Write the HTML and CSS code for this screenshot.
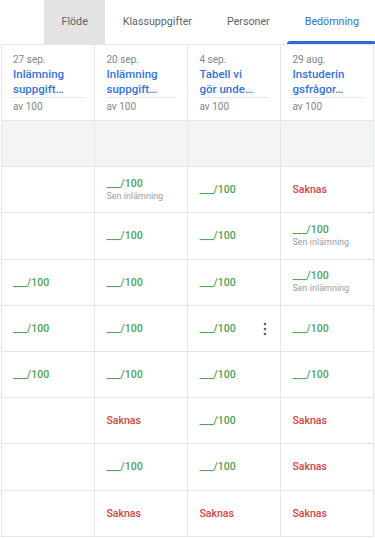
FILE: index.html
```html
<!DOCTYPE html>
<html lang="sv">
<head>
<meta charset="utf-8">
<title>Bedömning</title>
<link rel="stylesheet" href="styles.css">
</head>
<body>
<nav class="tabs">
  <div class="tab tab-hover">Flöde</div>
  <div class="tab">Klassuppgifter</div>
  <div class="tab">Personer</div>
  <div class="tab tab-active">Bedömning</div>
</nav>
<div class="grid">
  <div class="cell head">
    <div class="date">27 sep.</div>
    <div class="title"><span>Inlämning</span><span>suppgift…</span></div>
    <div class="pts">av 100</div>
  </div>
  <div class="cell head">
    <div class="date">20 sep.</div>
    <div class="title"><span>Inlämning</span><span>suppgift…</span></div>
    <div class="pts">av 100</div>
  </div>
  <div class="cell head">
    <div class="date">4 sep.</div>
    <div class="title"><span>Tabell vi</span><span>gör unde…</span></div>
    <div class="pts">av 100</div>
  </div>
  <div class="cell head">
    <div class="date">29 aug.</div>
    <div class="title"><span>Instuderin</span><span>gsfrågor…</span></div>
    <div class="pts">av 100</div>
  </div>

  <div class="cell avg"></div><div class="cell avg"></div><div class="cell avg"></div><div class="cell avg"></div>

  <div class="cell"></div>
  <div class="cell"><span class="score">___/100</span><span class="late">Sen inlämning</span></div>
  <div class="cell"><span class="score">___/100</span></div>
  <div class="cell"><span class="missing">Saknas</span></div>

  <div class="cell"></div>
  <div class="cell"><span class="score">___/100</span></div>
  <div class="cell"><span class="score">___/100</span></div>
  <div class="cell"><span class="score">___/100</span><span class="late">Sen inlämning</span></div>

  <div class="cell"><span class="score">___/100</span></div>
  <div class="cell"><span class="score">___/100</span></div>
  <div class="cell"><span class="score">___/100</span></div>
  <div class="cell"><span class="score">___/100</span><span class="late">Sen inlämning</span></div>

  <div class="cell"><span class="score">___/100</span></div>
  <div class="cell"><span class="score">___/100</span></div>
  <div class="cell menu-cell"><span class="score">___/100</span>
    <svg class="kebab" width="4" height="14" viewBox="0 0 4 14"><circle cx="2" cy="2" r="1.3"/><circle cx="2" cy="7" r="1.3"/><circle cx="2" cy="12" r="1.3"/></svg>
  </div>
  <div class="cell"><span class="score">___/100</span></div>

  <div class="cell"><span class="score">___/100</span></div>
  <div class="cell"><span class="score">___/100</span></div>
  <div class="cell"><span class="score">___/100</span></div>
  <div class="cell"><span class="score">___/100</span></div>

  <div class="cell"></div>
  <div class="cell"><span class="missing">Saknas</span></div>
  <div class="cell"><span class="score">___/100</span></div>
  <div class="cell"><span class="missing">Saknas</span></div>

  <div class="cell"></div>
  <div class="cell"><span class="score">___/100</span></div>
  <div class="cell"><span class="score">___/100</span></div>
  <div class="cell"><span class="missing">Saknas</span></div>

  <div class="cell"></div>
  <div class="cell"><span class="missing">Saknas</span></div>
  <div class="cell"><span class="missing">Saknas</span></div>
  <div class="cell"><span class="missing">Saknas</span></div>
</div>
</body>
</html>
```
FILE: styles.css
```css
* { box-sizing: border-box; }
html, body {
  margin: 0;
  padding: 0;
  background: #ffffff;
  font-family: Roboto, "Liberation Sans", Arial, sans-serif;
  overflow: hidden;
}
.tabs {
  display: flex;
  height: 44px;
  padding-left: 44px;
  overflow: hidden;
  white-space: nowrap;
}
.tab {
  position: relative;
  flex: none;
  padding: 0 17.5px;
  line-height: 44px;
  font-size: 10.7px;
  font-weight: 400;
  color: #5f6368;
}
.tab-hover { background: #e3e3e3; }
.tab-active { color: #2f6fd9; }
.tab-active::after {
  content: "";
  position: absolute;
  left: 0;
  right: 0;
  bottom: 0;
  height: 3px;
  background: #2f6bd6;
  border-radius: 3px 3px 0 0;
}
.grid {
  display: grid;
  grid-template-columns: repeat(4, 93px);
  margin-left: 1px;
  border-left: 1px solid #e6e6e6;
  border-top: 1px solid #e6e6e6;
  width: 373px;
}
.cell {
  height: 46.2px;
  border-right: 1px solid #e6e6e6;
  border-bottom: 1px solid #e6e6e6;
  padding: 0 12px 0 11px;
  display: flex;
  flex-direction: column;
  justify-content: center;
}
.grid .cell:nth-child(4n+2),
.grid .cell:nth-child(4n+3),
.grid .cell:nth-child(4n) { padding-left: 11.5px; }
.head {
  height: 76px;
  justify-content: flex-start;
  padding-top: 8px;
}
.date {
  font-size: 10px;
  line-height: 14px;
  color: #80868b;
}
.title {
  display: flex;
  flex-direction: column;
  font-size: 11.5px;
  font-weight: 500;
  line-height: 14.5px;
  color: #3473de;
  padding-bottom: 1px;
  border-bottom: 1px solid #e6e6e6;
  margin-right: -1px;
  white-space: nowrap;
}
.pts {
  font-size: 10px;
  line-height: 14px;
  margin-top: 2px;
  color: #80868b;
}
.avg { background: #f3f4f6; }
.score {
  font-size: 10.5px;
  line-height: 13px;
  font-weight: 500;
  color: #4aa257;
}
.late {
  font-size: 9px;
  line-height: 13px;
  color: #9aa0a6;
}
.missing {
  font-size: 10.5px;
  line-height: 13px;
  font-weight: 500;
  color: #d3463d;
}
.menu-cell { position: relative; }
.kebab {
  position: absolute;
  left: 74.5px;
  top: 16.5px;
  fill: #5f6368;
}
```
